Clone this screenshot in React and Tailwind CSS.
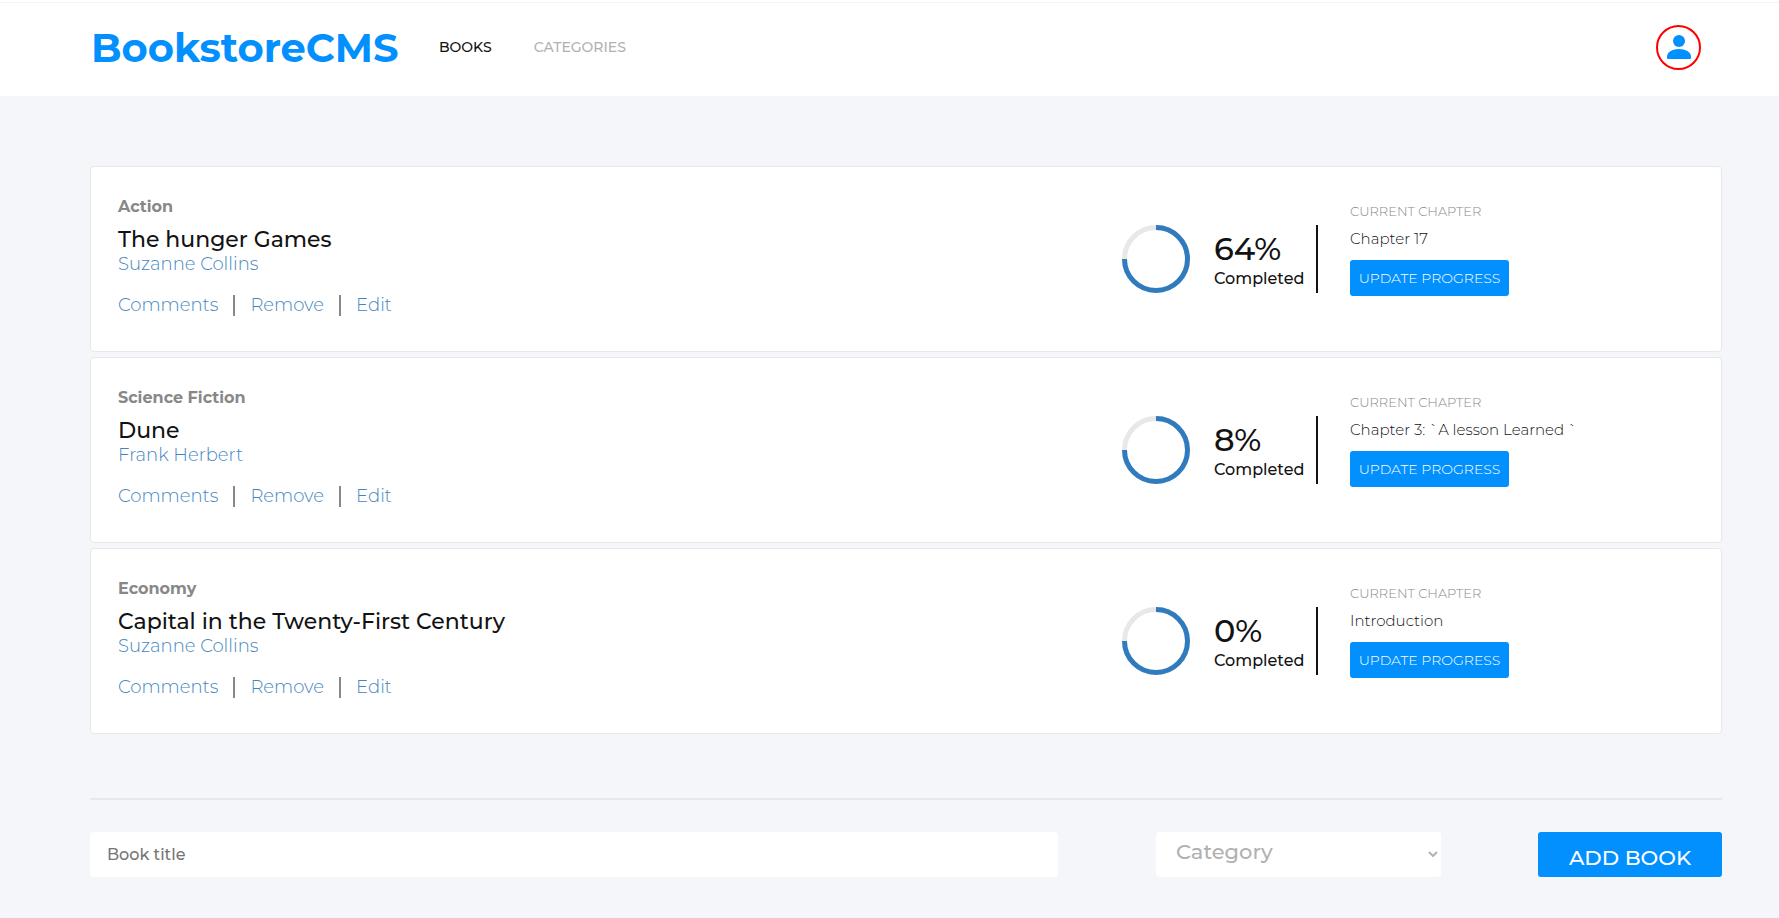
const books = [
  { category: 'Action', title: 'The hunger Games', author: 'Suzanne Collins', percent: 64, chapter: 'Chapter 17' },
  { category: 'Science Fiction', title: 'Dune', author: 'Frank Herbert', percent: 8, chapter: 'Chapter 3: `A lesson Learned `' },
  { category: 'Economy', title: 'Capital in the Twenty-First Century', author: 'Suzanne Collins', percent: 0, chapter: 'Introduction' },
];

function UserIcon() {
  return (
    <svg viewBox="0 0 24 24" className="size-6 fill-[#0290ff]" aria-hidden="true">
      <circle cx="12" cy="6" r="6" />
      <path d="M1 24Q0 24 0 23v-1.500C0 17 5.500 14 12 14s12 3 12 7.500V23q0 1-1 1z" />
    </svg>
  );
}

function ProgressRing() {
  return (
    <svg viewBox="0 0 68 68" className="size-[68px] shrink-0 fill-none stroke-5" aria-hidden="true">
      <circle cx="34" cy="34" r="31.500" className="stroke-[#e8e8e8]" />
      <path d="M34 2.500A31.500 31.500 0 1 1 2.500 34" className="stroke-[#307bbe]" />
    </svg>
  );
}

function BookCard({ book }) {
  return (
    <li className="flex items-start rounded border border-[#e8e8e8] bg-white pb-[34px] pl-[27px]">
      <div className="flex-1 pt-7">
        <p className="text-base/6 font-bold text-[#888]">{book.category}</p>
        <h2 className="mt-[7px] text-[22px]/7 font-medium text-[#121212]">{book.title}</h2>
        <p className="text-lg/5 font-light text-[#4386bf]">{book.author}</p>
        <div className="mt-[19px] flex items-center gap-[15px] text-lg/6 font-light text-[#4386bf]">
          <button type="button">Comments</button>
          <span className="h-[21px] w-0.5 bg-[#888]" />
          <button type="button">Remove</button>
          <span className="h-[21px] w-0.5 bg-[#888]" />
          <button type="button">Edit</button>
        </div>
      </div>
      <div className="mt-[58px] flex items-center">
        <ProgressRing />
        <div className="ml-6 w-[102px] pt-1">
          <p className="text-[32px]/8 font-medium text-[#121212]">{book.percent}%</p>
          <p className="mt-1 text-base/5 font-medium text-[#121212]">Completed</p>
        </div>
        <span className="h-[68px] w-0.5 bg-[#121212]" />
      </div>
      <div className="ml-8 w-[371px] pt-9">
        <p className="text-[13px]/4 font-light text-[#888]">CURRENT CHAPTER</p>
        <p className="mt-2 text-[15px]/6 font-light text-[#121212]">{book.chapter}</p>
        <button type="button" className="mt-[9px] h-9 w-[159px] rounded-[3px] bg-[#0290ff] text-sm font-light text-white">
          UPDATE PROGRESS
        </button>
      </div>
    </li>
  );
}

export default function App() {
  return (
    <div className="min-h-screen bg-[#f5f6fa] font-['Montserrat','Inter',sans-serif]">
      <header className="flex h-24 items-center border-b border-white bg-white pr-[78px] pl-[91px] shadow-[inset_0_2px_0_#fff,inset_0_3px_0_#f3f3f3]">
        <h1 className="w-[348px] text-[40px] font-bold text-[#0290ff]">BookstoreCMS</h1>
        <nav className="flex flex-1 gap-[42px] pb-px text-sm">
          <a href="#books" className="font-medium text-[#121212]">BOOKS</a>
          <a href="#categories" className="font-medium text-[#b1b1b1]">CATEGORIES</a>
        </nav>
        <button type="button" aria-label="Account" className="flex size-[45px] items-center justify-center rounded-full border-2 border-[#ff0000] pb-px">
          <UserIcon />
        </button>
      </header>
      <main className="pt-[70px] pr-[57px] pl-[90px]">
        <ul className="flex flex-col gap-[5px]">
          {books.map((book) => <BookCard key={book.title} book={book} />)}
        </ul>
        <hr className="mt-16 border-t-2 border-[#e8e8e8]" />
        <form className="mt-8 flex h-[45px]">
          <input type="text" aria-label="Book title" placeholder="Book title" className="min-w-0 flex-1 rounded bg-white px-[17px] text-base font-medium text-[#121212] placeholder:text-[#757575]" />
          <div className="relative mr-[97px] ml-[98px] w-[285px]">
            <select aria-label="Category" className="h-full w-full appearance-none rounded bg-white pb-1.5 pl-5 text-[21px] font-medium text-[#b1b1b1]">
              <option>Category</option>
            </select>
            <svg viewBox="0 0 10 6" className="pointer-events-none absolute top-[19px] right-[3px] h-1.5 w-2.5 fill-none stroke-[#b1b1b1] stroke-2" aria-hidden="true">
              <path d="M1 1l4 4 4-4" />
            </svg>
          </div>
          <button type="button" className="w-[184px] rounded-[3px] bg-[#0290ff] pt-1.5 text-[21px] font-medium text-white">ADD BOOK</button>
        </form>
      </main>
    </div>
  );
}
